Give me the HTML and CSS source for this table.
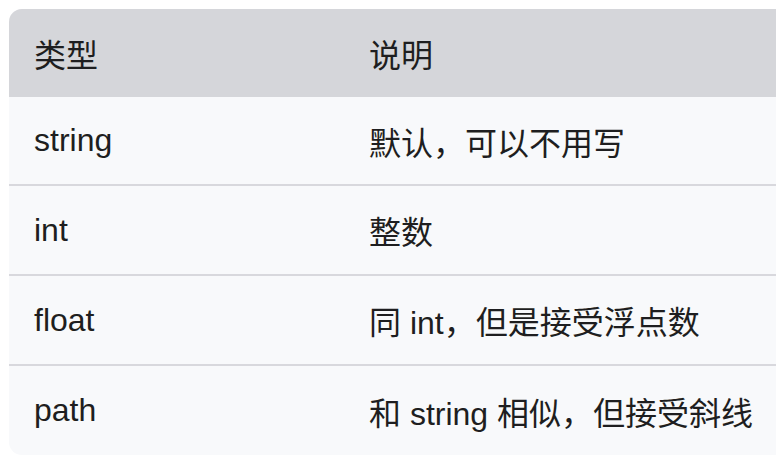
FILE: index.html
```html
<!DOCTYPE html>
<html lang="zh">
<head>
<meta charset="utf-8">
<link rel="stylesheet" href="styles.css">
</head>
<body>
<div class="wrap">
  <table class="types">
    <thead>
      <tr><th>类型</th><th>说明</th></tr>
    </thead>
    <tbody>
      <tr><td>string</td><td>默认，可以不用写</td></tr>
      <tr><td>int</td><td>整数</td></tr>
      <tr><td>float</td><td>同 int，但是接受浮点数</td></tr>
      <tr><td>path</td><td>和 string 相似，但接受斜线</td></tr>
    </tbody>
  </table>
</div>
</body>
</html>
```
FILE: styles.css
```css
html, body {
  margin: 0;
  padding: 0;
  background: #ffffff;
  overflow: hidden;
}
body {
  padding: 9px 0 0 9px;
  font-family: "Liberation Sans", "Noto Sans CJK SC", sans-serif;
  color: #1e1e20;
}
.wrap {
  width: 800px;
  border-radius: 13px;
  overflow: hidden;
  background: #f8f9fb;
}
.types {
  width: 100%;
  border-collapse: collapse;
  font-size: 32px;
}
.types th, .types td {
  text-align: left;
  font-weight: normal;
  padding: 0 0 0 25px;
  vertical-align: middle;
}
.types th:first-child, .types td:first-child {
  width: 310px;
}
.types thead tr {
  background: #d5d6da;
  height: 88px;
}
.types tbody tr {
  height: 88px;
}
.types tbody tr + tr {
  height: 90px;
  border-top: 2px solid #d8d8dd;
}
```
